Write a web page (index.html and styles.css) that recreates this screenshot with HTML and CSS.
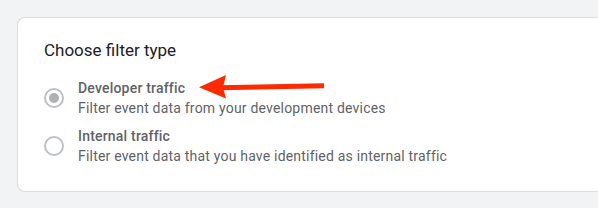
FILE: index.html
```html
<!DOCTYPE html>
<html lang="en">
<head>
    <meta charset="UTF-8">
    <meta name="viewport" content="width=device-width, initial-scale=1.0">
    <title>Choose filter type</title>
    <link rel="stylesheet" href="styles.css">
</head>
<body>
    <div class="card">
        <h2 class="card-title">Choose filter type</h2>

        <div class="options">
            <label class="option">
                <span class="radio checked"></span>
                <span class="option-text">
                    <span class="option-label">Developer traffic</span>
                    <span class="option-desc">Filter event data from your development devices</span>
                </span>
            </label>
            <label class="option">
                <span class="radio"></span>
                <span class="option-text">
                    <span class="option-label">Internal traffic</span>
                    <span class="option-desc">Filter event data that you have identified as internal traffic</span>
                </span>
            </label>
        </div>
    </div>

    <!-- annotation arrow -->
    <svg class="arrow" width="140" height="35" viewBox="0 0 140 35">
        <line x1="30" y1="17.8" x2="134" y2="15.7" stroke="#ff2a00" stroke-width="5"/>
        <polygon points="9,17.3 36,5 33,17.5 36,28.5" fill="#ff2a00"/>
    </svg>
</body>
</html>
```

FILE: styles.css
```css
body {
    margin: 0;
    padding: 17px 0 0 17px;
    background-color: #f1f3f4;
    font-family: Roboto, "Noto Sans", Arial, sans-serif;
    height: 208px;
    box-sizing: border-box;
    overflow: hidden;
}
.card {
    height: 175px;
    box-sizing: border-box;
    background: white;
    border: 1px solid #dadce0;
    border-right: none;
    border-radius: 8px 0 0 8px;
    padding: 20px 26px 0;
}
.card-title {
    margin: 0 0 16px;
    font-size: 17px;
    font-weight: 400;
    line-height: 24px;
    color: #202124;
}
.options {
    display: flex;
    flex-direction: column;
    gap: 8px;
}
.option {
    display: flex;
    align-items: center;
    gap: 14px;
    height: 40px;
}
.radio {
    width: 20px;
    height: 20px;
    box-sizing: border-box;
    border: 2px solid #bdc1c6;
    border-radius: 50%;
    display: flex;
    align-items: center;
    justify-content: center;
    flex-shrink: 0;
}
.radio.checked::after {
    content: "";
    width: 10px;
    height: 10px;
    border-radius: 50%;
    background-color: #aeb1b5;
}
.option-text {
    display: flex;
    flex-direction: column;
    font-size: 14px;
    line-height: 20px;
    letter-spacing: 0.2px;
    color: #5f6368;
}
.option-label {
    font-weight: 500;
}
.arrow {
    position: absolute;
    left: 190px;
    top: 70px;
}
```
